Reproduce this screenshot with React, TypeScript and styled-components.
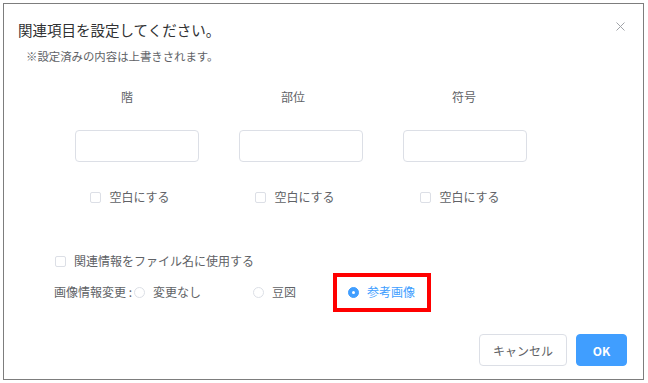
import React from 'react';
import styled, { createGlobalStyle } from 'styled-components';

const GlobalStyle = createGlobalStyle`
    html, body {
        margin: 0;
        padding: 0;
        background: #ffffff;
    }
    body {
        font-family: "Noto Sans CJK JP", "Noto Sans", sans-serif;
        color: #606266;
    }
`;

const Page = styled.div`
    padding: 3px;
`;

const Dialog = styled.div`
    box-sizing: border-box;
    width: 641px;
    height: 377px;
    border: 1px solid #7d7d7d;
    background: #fff;
    display: flex;
    flex-direction: column;
`;

const Header = styled.div`
    display: flex;
    justify-content: space-between;
    align-items: flex-start;
    padding: 16px 18px 0 14px;
`;

const Title = styled.div`
    font-size: 14.5px;
    line-height: 20px;
    color: #303133;
`;

const CloseButton = styled.button`
    border: none;
    background: none;
    padding: 0;
    margin-top: 2px;
    width: 9px;
    height: 9px;
    display: flex;
    cursor: pointer;
`;

const Note = styled.div`
    margin: 8px 0 0 22px;
    font-size: 11.4px;
    line-height: 16px;
    color: #606266;
`;

const Fields = styled.div`
    display: grid;
    grid-template-columns: repeat(3, 124px);
    column-gap: 40px;
    margin: 25px 0 0 71px;
`;

const FieldLabel = styled.div<{ $shift: number }>`
    grid-row: 1;
    text-align: center;
    font-size: 12px;
    line-height: 16px;
    color: #606266;
    transform: translateX(${({ $shift }) => $shift}px);
`;

const TextInput = styled.input`
    grid-row: 2;
    box-sizing: border-box;
    width: 124px;
    height: 32px;
    margin-top: 25px;
    border: 1px solid #dcdfe6;
    border-radius: 4px;
    outline: none;
    padding: 0 10px;
`;

const BlankCell = styled.div<{ $shift: number }>`
    grid-row: 3;
    margin-top: 27px;
    display: flex;
    justify-content: center;
    transform: translateX(${({ $shift }) => $shift}px);
`;

const CheckLabel = styled.label<{ $indent?: number; $top?: number }>`
    display: inline-flex;
    align-items: center;
    gap: 8px;
    font-size: 12px;
    line-height: 16px;
    color: #606266;
    margin-left: ${({ $indent }) => $indent || 0}px;
    margin-top: ${({ $top }) => $top || 0}px;
`;

const Box = styled.span`
    box-sizing: border-box;
    width: 11px;
    height: 11px;
    border: 1px solid #dcdfe6;
    border-radius: 2px;
    background: #fff;
`;

const OptionsArea = styled.div`
    display: flex;
    flex-direction: column;
    align-items: flex-start;
`;

const RadioRow = styled.div`
    display: flex;
    align-items: center;
    margin: 15px 0 0 50px;
    font-size: 12px;
    line-height: 16px;
    color: #606266;
`;

const RadioCaption = styled.span`
    margin-right: 2px;
    white-space: pre;
`;

const RadioItem = styled.label<{ $checked?: boolean; $highlight?: boolean }>`
    position: relative;
    display: inline-flex;
    align-items: center;
    gap: 8px;
    margin-right: 52px;
    color: ${({ $checked }) => ($checked ? '#409eff' : '#606266')};

    &::after {
        content: '';
        display: ${({ $highlight }) => ($highlight ? 'block' : 'none')};
        position: absolute;
        top: -11px;
        bottom: -12px;
        left: -15px;
        right: -16px;
        border: 4px solid #ff0000;
    }
`;

const Dot = styled.span<{ $checked?: boolean }>`
    box-sizing: border-box;
    width: 11px;
    height: 11px;
    border-radius: 50%;
    border: 1px solid ${({ $checked }) => ($checked ? '#409eff' : '#dcdfe6')};
    background: ${({ $checked }) => ($checked ? '#409eff' : '#fff')};
    display: flex;
    align-items: center;
    justify-content: center;

    &::before {
        content: '';
        width: 3px;
        height: 3px;
        border-radius: 50%;
        background: #fff;
        display: ${({ $checked }) => ($checked ? 'block' : 'none')};
    }
`;

const Footer = styled.div`
    display: flex;
    justify-content: flex-end;
    gap: 9px;
    margin-top: 34px;
    padding-right: 16px;
`;

const Button = styled.button<{ $primary?: boolean }>`
    box-sizing: border-box;
    height: 32px;
    padding: 0;
    width: ${({ $primary }) => ($primary ? '51px' : '88px')};
    border-radius: 4px;
    border: 1px solid ${({ $primary }) => ($primary ? '#409eff' : '#dcdfe6')};
    background: ${({ $primary }) => ($primary ? '#409eff' : '#fff')};
    color: ${({ $primary }) => ($primary ? '#fff' : '#606266')};
    font-family: "Noto Sans CJK JP", "Noto Sans", sans-serif;
    font-size: 12px;
    font-weight: ${({ $primary }) => ($primary ? 700 : 400)};
    cursor: pointer;
`;

const fields = [
    { label: '階', labelShift: -10, boxShift: -7 },
    { label: '部位', labelShift: -8, boxShift: -6 },
    { label: '符号', labelShift: -1, boxShift: -5 },
];

const radios = [
    { label: '変更なし', checked: false },
    { label: '豆図', checked: false },
    { label: '参考画像', checked: true },
];

export default function App() {
    return (
        <Page>
            <GlobalStyle />
            <Dialog>
                <Header>
                    <Title>関連項目を設定してください。</Title>
                    <CloseButton aria-label="close">
                        <svg width="9" height="9" viewBox="0 0 9 9">
                            <path d="M0.5 0.5 L8.5 8.5 M8.5 0.5 L0.5 8.5" stroke="#a0a3a8" strokeWidth="1" />
                        </svg>
                    </CloseButton>
                </Header>
                <Note>※設定済みの内容は上書きされます。</Note>

                <Fields>
                    {fields.map((f) => (
                        <FieldLabel key={f.label} $shift={f.labelShift}>{f.label}</FieldLabel>
                    ))}
                    {fields.map((f) => (
                        <TextInput key={f.label} />
                    ))}
                    {fields.map((f) => (
                        <BlankCell key={f.label} $shift={f.boxShift}>
                            <CheckLabel>
                                <Box />
                                空白にする
                            </CheckLabel>
                        </BlankCell>
                    ))}
                </Fields>

                <OptionsArea>
                    <CheckLabel $indent={51} $top={48}>
                        <Box />
                        関連情報をファイル名に使用する
                    </CheckLabel>
                    <RadioRow>
                        <RadioCaption>画像情報変更 :</RadioCaption>
                        {radios.map((r) => (
                            <RadioItem key={r.label} $checked={r.checked} $highlight={r.checked}>
                                <Dot $checked={r.checked} />
                                {r.label}
                            </RadioItem>
                        ))}
                    </RadioRow>
                </OptionsArea>

                <Footer>
                    <Button>キャンセル</Button>
                    <Button $primary>OK</Button>
                </Footer>
            </Dialog>
        </Page>
    );
}
